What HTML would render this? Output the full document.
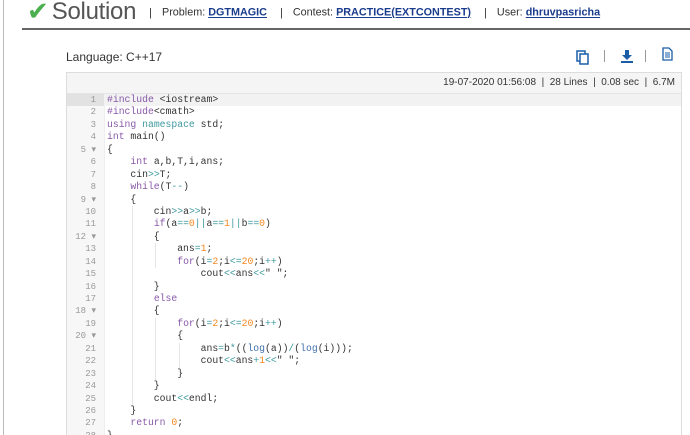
<!DOCTYPE html><html><head><style>
html,body{margin:0;width:690px;height:435px;overflow:hidden;background:#fff;font-family:"Liberation Sans",sans-serif;position:relative}
.lb{position:absolute;left:3px;top:0;width:1px;height:435px;background:#bbb}
.hd{position:absolute;left:27px;top:-4px;white-space:nowrap;color:#444}
.ck{color:#4caf50;font-size:26px;vertical-align:middle}
.sol{font-size:24px;color:#555;vertical-align:middle;margin-left:3px;letter-spacing:-0.3px}
.sep{font-size:11px;margin:0 10px 0 13px;color:#333}
.m{font-size:10.8px;color:#333}
.m a{color:#1a3c8c;font-weight:bold;text-decoration:underline}
.hr{position:absolute;left:22px;top:28px;width:668px;height:2px;background:#666}
.lang{position:absolute;left:66px;top:50px;font-size:12px;color:#333}
.box{position:absolute;left:66px;top:72px;width:614px;height:363px;border:1px solid #ddd;border-bottom:none;background:#fff;overflow:hidden}
.info{height:20px;background:#f5f5f5;border-bottom:1px solid #e4e4e4;font-size:10px;color:#333;text-align:right;line-height:20px;padding-right:6px}
.gut{position:absolute;left:0;top:21px;width:37px;height:360px;background:#f7f7f7;border-right:1px solid #eee}
.code{position:absolute;left:0;top:21px;width:614px;font-family:"Liberation Mono",monospace;font-size:9.75px;line-height:12.45px;color:#333}
.ln{display:inline-block;width:29px;text-align:right;color:#999;font-size:9px;margin-right:11px}
.r{white-space:pre;height:12.45px}
.r1{background:linear-gradient(to right,#e2e2e2 37px,#f2f2f2 37px)}
.k{color:#8959a8}.t{color:#3e999f}.n{color:#f5871f}.f{color:#4271ae}
.g{position:absolute;width:1px;background:#e6e6e6}
</style></head><body>
<div class="lb"></div>
<div class="hd"><span class="ck">✔</span><span class="sol">Solution</span><span class="sep">|</span><span class="m">Problem: <a>DGTMAGIC</a></span><span class="sep">|</span><span class="m">Contest: <a>PRACTICE(EXTCONTEST)</a></span><span class="sep">|</span><span class="m">User: <a>dhruvpasricha</a></span></div>
<div class="hr"></div>
<div class="lang">Language: C++17</div>
<svg style="position:absolute;left:576px;top:50px" width="14" height="15"><rect x="1" y="1" width="8" height="10" fill="none" stroke="#1a5ea8" stroke-width="1.5"/><rect x="4" y="4" width="8" height="10" fill="#fff" stroke="#1a5ea8" stroke-width="1.5"/></svg>
<div style="position:absolute;left:604px;top:50px;width:1px;height:12px;background:#999"></div>
<svg style="position:absolute;left:621px;top:49px" width="12" height="14"><path d="M4 1h4v5h3l-5 5-5-5h3z" fill="#1a5ea8"/><rect x="0" y="12" width="12" height="2" fill="#1a5ea8"/></svg>
<div style="position:absolute;left:645px;top:50px;width:1px;height:12px;background:#999"></div>
<svg style="position:absolute;left:662px;top:47px" width="11" height="14"><path d="M1 1h6l3 3v9H1z" fill="none" stroke="#1a5ea8" stroke-width="1.3"/><path d="M3 6h5M3 8h5M3 10h5" stroke="#1a5ea8"/></svg>
<div class="box"><div class="info">19-07-2020 01:56:08 &nbsp;|&nbsp; 28 Lines &nbsp;|&nbsp; 0.08 sec &nbsp;|&nbsp; 6.7M</div>
<div class="gut"></div>
<div class="g" style="left:65px;top:133px;height:200px"></div>
<div class="g" style="left:88px;top:170px;height:25px"></div>
<div class="g" style="left:88px;top:245px;height:62px"></div>
<div class="g" style="left:112px;top:270px;height:25px"></div>
<div class="code">
<div class="r r1"><span class="ln">1</span><span class="k">#include</span> &lt;iostream&gt;</div>
<div class="r"><span class="ln">2</span><span class="k">#include</span>&lt;cmath&gt;</div>
<div class="r"><span class="ln">3</span><span class="k">using</span> <span class="t">namespace</span> std;</div>
<div class="r"><span class="ln">4</span><span class="k">int</span> main()</div>
<div class="r"><span class="ln">5 ▾</span>{</div>
<div class="r"><span class="ln">6</span>    <span class="k">int</span> a,b,T,i,ans;</div>
<div class="r"><span class="ln">7</span>    cin<span class="t">&gt;&gt;</span>T;</div>
<div class="r"><span class="ln">8</span>    <span class="k">while</span>(T<span class="t">--</span>)</div>
<div class="r"><span class="ln">9 ▾</span>    {</div>
<div class="r"><span class="ln">10</span>        cin<span class="t">&gt;&gt;</span>a<span class="t">&gt;&gt;</span>b;</div>
<div class="r"><span class="ln">11</span>        <span class="k">if</span>(a<span class="t">==</span><span class="n">0</span><span class="t">||</span>a<span class="t">==</span><span class="n">1</span><span class="t">||</span>b<span class="t">==</span><span class="n">0</span>)</div>
<div class="r"><span class="ln">12 ▾</span>        {</div>
<div class="r"><span class="ln">13</span>            ans<span class="t">=</span><span class="n">1</span>;</div>
<div class="r"><span class="ln">14</span>            <span class="k">for</span>(i<span class="t">=</span><span class="n">2</span>;i<span class="t">&lt;=</span><span class="n">20</span>;i<span class="t">++</span>)</div>
<div class="r"><span class="ln">15</span>                cout<span class="t">&lt;&lt;</span>ans<span class="t">&lt;&lt;</span>" ";</div>
<div class="r"><span class="ln">16</span>        }</div>
<div class="r"><span class="ln">17</span>        <span class="k">else</span></div>
<div class="r"><span class="ln">18 ▾</span>        {</div>
<div class="r"><span class="ln">19</span>            <span class="k">for</span>(i<span class="t">=</span><span class="n">2</span>;i<span class="t">&lt;=</span><span class="n">20</span>;i<span class="t">++</span>)</div>
<div class="r"><span class="ln">20 ▾</span>            {</div>
<div class="r"><span class="ln">21</span>                ans<span class="t">=</span>b<span class="t">*</span>((<span class="f">log</span>(a))<span class="t">/</span>(<span class="f">log</span>(i)));</div>
<div class="r"><span class="ln">22</span>                cout<span class="t">&lt;&lt;</span>ans<span class="t">+</span><span class="n">1</span><span class="t">&lt;&lt;</span>" ";</div>
<div class="r"><span class="ln">23</span>            }</div>
<div class="r"><span class="ln">24</span>        }</div>
<div class="r"><span class="ln">25</span>        cout<span class="t">&lt;&lt;</span>endl;</div>
<div class="r"><span class="ln">26</span>    }</div>
<div class="r"><span class="ln">27</span>    <span class="k">return</span> <span class="n">0</span>;</div>
<div class="r"><span class="ln">28</span>}</div>
</div></div>
</body></html>
